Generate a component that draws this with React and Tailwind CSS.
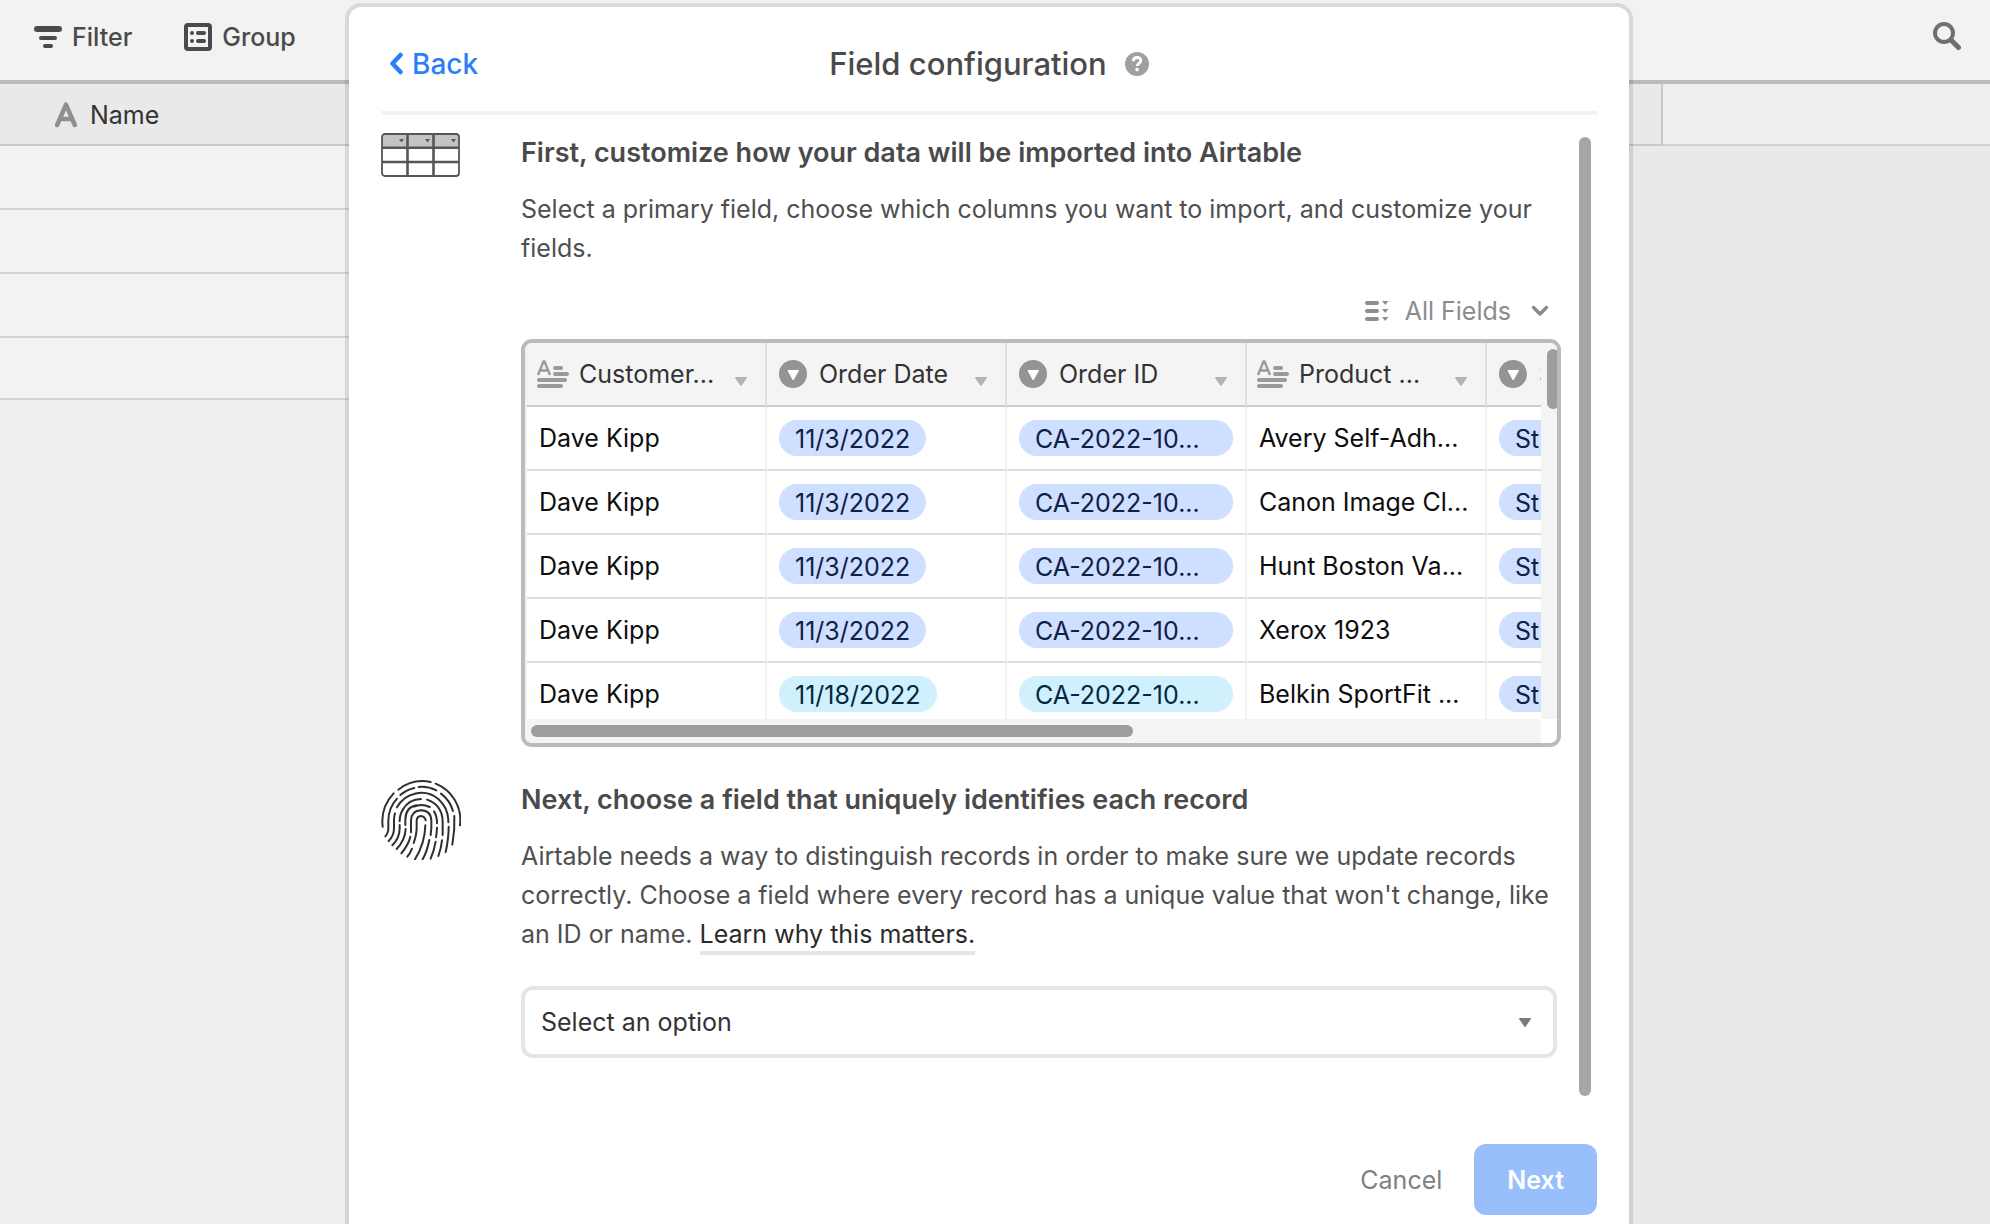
import React from "react";

const columns = [
  { name: "Customer...", type: "text" },
  { name: "Order Date", type: "select" },
  { name: "Order ID", type: "select", fill: true },
  { name: "Product ...", type: "text" },
  { name: "S", type: "select", fill: true },
];

const rows = [
  ["Dave Kipp", "11/3/2022", "CA-2022-10...", "Avery Self-Adh...", "St"],
  ["Dave Kipp", "11/3/2022", "CA-2022-10...", "Canon Image Cl...", "St"],
  ["Dave Kipp", "11/3/2022", "CA-2022-10...", "Hunt Boston Va...", "St"],
  ["Dave Kipp", "11/3/2022", "CA-2022-10...", "Xerox 1923", "St"],
  ["Dave Kipp", "11/18/2022", "CA-2022-10...", "Belkin SportFit ...", "St"],
];

function FilterIcon() {
  return (
    <svg className="h-7 w-7" viewBox="0 0 28 28" fill="#4a4a4a" aria-hidden="true">
      <rect x="0" y="3" width="28" height="6" rx="3" />
      <rect x="5" y="13" width="18" height="4" rx="2" />
      <rect x="9" y="21" width="10" height="4" rx="2" />
    </svg>
  );
}

function GroupIcon() {
  return (
    <svg className="h-7 w-7" viewBox="0 0 28 28" aria-hidden="true">
      <rect x="2" y="2" width="24" height="24" rx="2" fill="none" stroke="#4a4a4a" strokeWidth="4" />
      <g fill="#4a4a4a">
        <circle cx="8" cy="10" r="2" />
        <rect x="12" y="8" width="10" height="4" rx="2" />
        <circle cx="8" cy="18" r="2" />
        <rect x="12" y="16" width="10" height="4" rx="2" />
      </g>
    </svg>
  );
}

function SearchIcon() {
  return (
    <svg className="h-7 w-7" viewBox="0 0 28 28" fill="none" stroke="#6f6f6f" aria-hidden="true">
      <circle cx="11" cy="11" r="9" strokeWidth="4" />
      <path d="M18 18l7.500 7.500" strokeWidth="5" strokeLinecap="round" />
    </svg>
  );
}

function LetterIcon() {
  return (
    <svg className="h-[26px] w-[22px]" viewBox="0 0 22 26" fill="none" stroke="#8f8f8f" strokeWidth="4.500" strokeLinecap="round" strokeLinejoin="round" aria-hidden="true">
      <path d="M2.200 23L11 2.700l8.800 20.300M5.500 17h11" />
    </svg>
  );
}

function HelpIcon() {
  return (
    <svg className="h-6 w-6" viewBox="0 0 24 24" aria-hidden="true">
      <circle cx="12" cy="12" r="12" fill="#a0a0a0" />
      <path d="M8.300 9.200c.1-2.300 1.600-3.700 3.800-3.700 2.200 0 3.700 1.300 3.700 3.200 0 2.500-3.600 2.700-3.600 5.300" fill="none" stroke="#fff" strokeWidth="2.800" />
      <circle cx="12.100" cy="17.600" r="1.800" fill="#fff" />
    </svg>
  );
}

function TableIcon() {
  return (
    <svg className="h-11 w-20" viewBox="0 0 80 44" aria-hidden="true">
      <path d="M1 4a3 3 0 0 1 3-3h71a3 3 0 0 1 3 3v11H1z" fill="#c4c4c4" />
      <g fill="none" stroke="#565656" strokeWidth="1.800">
        <rect x="1" y="1" width="77" height="42" rx="3" />
        <path d="M26.500 1v42M52.500 1v42M1 14.800h77M1 29h77" strokeWidth="2.600" />
      </g>
      <g fill="#5a5a5a">
        <path d="M18 6h5l-2.500 3.600zM44 6h5l-2.500 3.600zM70 6h5l-2.500 3.600z" />
      </g>
    </svg>
  );
}

function FingerprintIcon() {
  return (
    <svg className="h-20 w-20" viewBox="14 15 240 240" fill="none" stroke="#2f2f2f" strokeWidth="6" strokeLinecap="round" aria-hidden="true">
      <path d="M19 155Q12 97 52 55" />
      <path d="M66 44A118 118 0 0 1 163 21" />
      <path d="M178 26A118 118 0 0 1 251 151" />
      <path d="M27 184Q37 174 36 155V137A98 98 0 0 1 62 71" />
      <path d="M72 60A100 100 0 0 1 114 39" />
      <path d="M127 36A100 100 0 0 1 180 46" />
      <path d="M194 56A100 100 0 0 1 230 108" />
      <path d="M234 123Q236 165 228 209" />
      <path d="M37 198Q53 182 53 160V135Q53 125 56 115" />
      <path d="M62 97A82 82 0 0 1 186 72Q214 97 216 135V142" />
      <path d="M217 155Q217 190 208 231" />
      <path d="M48 211Q70 190 70 160V150" />
      <path d="M70 139Q70 118 80 104" />
      <path d="M80 103A64 64 0 0 1 134 72" />
      <path d="M152 74Q198 90 199 140V180" />
      <path d="M197 196Q195 218 186 243" />
      <path d="M61 222Q86 196 88 162" />
      <path d="M87 150V134Q88 96 120 91" />
      <path d="M113 95Q135 84 160 96" />
      <path d="M173 109Q182 122 182 145" />
      <path d="M182 158Q181 177 179 187" />
      <path d="M178 200Q173 228 163 251" />
      <path d="M75 235Q97 208 102 185" />
      <path d="M104 172V137Q105 107 134 106Q164 107 165 137Q166 160 163 180" />
      <path d="M159 195Q152 230 139 253" />
      <path d="M93 245Q101 236 107 221" />
      <path d="M112 204Q121 178 121 158V137Q122 124 134 123Q145 124 148 136" />
      <path d="M147 151Q146 205 116 253" />
    </svg>
  );
}

function LongTextIcon() {
  return (
    <svg className="h-7 w-8 shrink-0" viewBox="0 0 32 28" fill="none" stroke="#9a9a9a" aria-hidden="true">
      <path d="M1 15L6.500 1.500h1L13 15M3 10.500h8" strokeWidth="2.400" />
      <path d="M18 8h6M18 14h12M2 20h26M2 26h22" strokeWidth="4" strokeLinecap="round" />
    </svg>
  );
}

function SelectTypeIcon() {
  return (
    <svg className="h-7 w-7 shrink-0" viewBox="0 0 28 28" aria-hidden="true">
      <circle cx="14" cy="14" r="14" fill="#949494" />
      <path d="M9 10.500h10.500L14.200 20z" fill="#fff" stroke="#fff" strokeWidth="1" strokeLinejoin="round" />
    </svg>
  );
}

function Caret({ className }) {
  return (
    <svg className={className} viewBox="0 0 12 9" fill="currentColor" aria-hidden="true">
      <path d="M1 0h10q1.500 0 .7 1.200L6.700 8.400q-.7 1-1.400 0L.3 1.200Q-.5 0 1 0z" />
    </svg>
  );
}

function FieldsIcon() {
  return (
    <svg className="h-6 w-6" viewBox="0 0 24 24" fill="#8f8f8f" aria-hidden="true">
      <rect x="0" y="2" width="14" height="4" rx="2" />
      <rect x="0" y="10" width="14" height="4" rx="2" />
      <rect x="0" y="18" width="14" height="4" rx="2" />
      <path d="M17 2h6.500l-3.200 4zM17 10h6.500l-3.200 4zM17 18h6.500l-3.200 4z" />
    </svg>
  );
}

function Background() {
  return (
    <div className="flex min-h-screen flex-col bg-[#e9e9e9]">
      <header className="flex h-[84px] items-start gap-[52px] border-b-4 border-[#bbbbbb] bg-[#f2f2f2] pt-[18px] pr-[29px] pl-[34px] text-[25px] font-medium leading-[38px] text-[#4a4a4a]">
        <button type="button" className="flex items-center gap-[10px]">
          <FilterIcon />
          Filter
        </button>
        <button type="button" className="flex items-center gap-[10px]">
          <GroupIcon />
          Group
        </button>
        <button type="button" aria-label="Search" className="ml-auto flex h-9 items-center">
          <SearchIcon />
        </button>
      </header>
      <div className="flex h-[62px] border-b-2 border-[#d0d3d4] bg-[#eeeeee]">
        <div className="-mb-[2px] flex w-[1663px] shrink-0 items-center gap-[13px] border-r-2 border-b-2 border-[#c8c8c8] bg-[#e9e9e9] pt-0.5 pl-[55px] text-[25px] leading-8 text-[#333333]">
          <LetterIcon />
          Name
        </div>
      </div>
      <div className="w-[800px] grow bg-[#efefef]">
        {[0, 1, 2].map((n) => (
          <div key={n} className="h-16 border-b-2 border-[#d3d6d8] bg-[#f2f2f2]" />
        ))}
        <div className="h-[62px] border-b-2 border-[#d3d6d8] bg-[#f2f2f2]" />
      </div>
    </div>
  );
}

function Cell({ value, column, cyan }) {
  if (column.type === "text") {
    return <span className="block whitespace-nowrap text-[#0d0d0d]">{value}</span>;
  }
  const tone = cyan ? "bg-[#d0f0fd] text-[#04283f]" : "bg-[#cfdfff] text-[#102046]";
  const width = column.fill ? "w-full" : "";
  return (
    <span className={`inline-block h-9 rounded-full px-4 align-middle leading-[38px] whitespace-nowrap ${tone} ${width}`}>
      {value}
    </span>
  );
}

function PreviewTable() {
  return (
    <div className="mr-2 grid h-[408px] grid-cols-[minmax(0,1fr)_16px] grid-rows-[minmax(0,1fr)_24px] overflow-hidden rounded-[11px] border-4 border-[#bbbbbb] bg-white">
      <div className="overflow-hidden">
        <table className="w-[1202px] table-fixed border-separate border-spacing-0 border-l-2 border-[#f0f0f0] text-left text-[25px] leading-8">
          <thead>
            <tr>
              {columns.map((c) => (
                <th key={c.name} scope="col" className="h-16 border-r-2 border-b-2 border-r-[#dddfe2] border-b-[#cccccc] bg-[#f4f4f4] px-3 py-0 font-normal text-[#333333]">
                  <div className="flex items-center">
                    <span className="mr-3 flex w-7 shrink-0 justify-center">
                      {c.type === "text" ? <LongTextIcon /> : <SelectTypeIcon />}
                    </span>
                    <span className="grow whitespace-nowrap">{c.name}</span>
                    <Caret className="mt-3.5 mr-1.5 h-[9px] w-3 shrink-0 text-[#b3b3b3]" />
                  </div>
                </th>
              ))}
            </tr>
          </thead>
          <tbody>
            {rows.map((row, r) => (
              <tr key={r}>
                {row.map((value, i) => (
                  <td key={i} className="h-16 border-r-2 border-b-2 border-r-[#f0f0f0] border-b-[#dddddd] px-3 py-0">
                    <Cell value={value} column={columns[i]} cyan={r === 4 && i < 3} />
                  </td>
                ))}
              </tr>
            ))}
          </tbody>
        </table>
      </div>
      <div className="flex justify-end overflow-hidden bg-[#f4f4f4] pt-1.5">
        <div className="-mr-0.5 h-[60px] w-3 rounded-full bg-[#9d9d9d]" />
      </div>
      <div className="bg-[#f4f4f4] px-1.5 py-1.5">
        <div className="h-3 w-3/5 rounded-full bg-[#9d9d9d]" />
      </div>
    </div>
  );
}

function Section({ icon, title, titleId, children }) {
  return (
    <section className="flex gap-[60px]">
      <div className="w-20 shrink-0">{icon}</div>
      <div className="min-w-0 grow text-[25px] leading-[39px] text-[#4f4f4f]">
        <h2 id={titleId} className="text-[27px] font-semibold leading-10 text-[#4a4a4a]">
          {title}
        </h2>
        {children}
      </div>
    </section>
  );
}

function Dialog() {
  return (
    <div role="dialog" aria-labelledby="dialog-title" className="w-full max-w-[1288px] self-start rounded-2xl border-4 border-black/10 bg-white bg-clip-padding px-8 pb-10">
      <div className="grid h-[108px] grid-cols-[1fr_auto_1fr] items-center border-b-4 border-[#f2f2f2] pt-2.5">
        <button type="button" className="ml-[7px] flex items-center gap-[8px] justify-self-start text-[28px] font-medium leading-10 text-[#2d7ff9]">
          <svg className="h-6 w-4" viewBox="0 0 16 24" fill="none" stroke="currentColor" strokeWidth="4.500" strokeLinecap="round" strokeLinejoin="round" aria-hidden="true">
            <path d="M12.500 3L4.500 11.500l8 8.500" />
          </svg>
          Back
        </button>
        <div className="flex items-center gap-[18px]">
          <h1 id="dialog-title" className="text-[31px] font-medium leading-10 text-[#4a4a4a]">
            Field configuration
          </h1>
          <button type="button" aria-label="Help">
            <HelpIcon />
          </button>
        </div>
      </div>

      <div className="flex pt-[18px]">
        <div className="min-w-0 grow pr-2.5">
          <Section icon={<TableIcon />} title="First, customize how your data will be imported into Airtable">
            <p className="mt-[17px]">
              Select a primary field, choose which columns you want to import, and customize your fields.
            </p>
            <button type="button" className="mt-[23px] mr-5 mb-2 ml-auto flex items-center text-[25px] leading-10 text-[#8c8c8c]">
              <FieldsIcon />
              <span className="mr-5 ml-4">All Fields</span>
              <svg className="h-3 w-[18px]" viewBox="0 0 18 12" fill="none" stroke="currentColor" strokeWidth="3.500" strokeLinecap="round" strokeLinejoin="round" aria-hidden="true">
                <path d="M2.500 2.500L9 9l6.500-6.500" />
              </svg>
            </button>
            <PreviewTable />
          </Section>

          <div className="mt-[33px]">
            <Section icon={<FingerprintIcon />} titleId="unique-title" title="Next, choose a field that uniquely identifies each record">
              <p className="mt-[17px]">
                Airtable needs a way to distinguish records in order to make sure we update records correctly. Choose a field where every record has a unique value that won't change, like an ID or name.{" "}
                <a href="#learn" className="border-b-4 border-[#e5e5e5] pb-0.5 text-[#2b2b2b]">
                  Learn why this matters.
                </a>
              </p>
              <div className="relative mt-8 mr-3">
                <select aria-labelledby="unique-title" className="h-[72px] w-full appearance-none rounded-xl border-4 border-[#e5e5e5] bg-white px-4 text-[25px] text-[#333333]">
                  <option>Select an option</option>
                </select>
                <Caret className="pointer-events-none absolute top-8 right-[26px] h-[9px] w-3 text-[#7a7a7a]" />
              </div>
            </Section>
          </div>
        </div>
        <div className="mt-1 mr-1.5 h-[959px] w-3 shrink-0 rounded-full bg-[#a6a6a6]" />
      </div>

      <div className="mt-12 flex items-center justify-end gap-8 text-[25px] leading-8">
        <button type="button" className="text-[#808080]">
          Cancel
        </button>
        <button type="button" className="h-[71px] rounded-xl bg-[#98bffc] px-[33px] font-semibold text-white">
          Next
        </button>
      </div>
    </div>
  );
}

export default function App() {
  return (
    <div className="relative h-screen overflow-hidden font-['Inter',sans-serif]">
      <Background />
      <div className="absolute inset-0 flex justify-center overflow-hidden pt-[3px] pr-3">
        <Dialog />
      </div>
    </div>
  );
}
